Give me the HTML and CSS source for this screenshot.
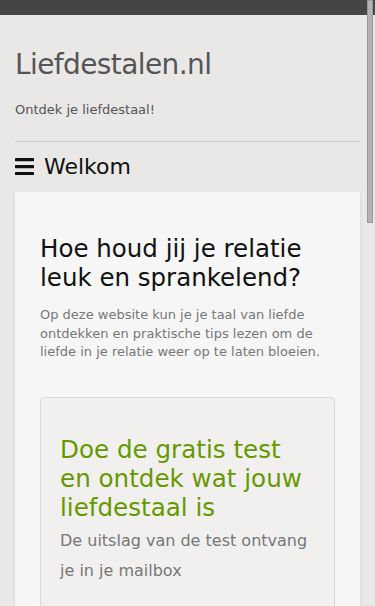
FILE: index.html
```html
<!DOCTYPE html>
<html>
<head>
    <title>Liefdestalen.nl</title>
    <link rel="stylesheet" href="styles.css">
</head>
<body>
    <div class="topbar"></div>
    <div class="container">
        <div class="header">
            <h1 class="site-title">Liefdestalen.nl</h1>
            <p class="tagline">Ontdek je liefdestaal!</p>
        </div>
        <div class="menu">
            <svg class="menu-icon" width="19" height="17" viewBox="0 0 19 17">
                <rect x="0" y="0" width="19" height="3.2" rx="0.6"/>
                <rect x="0" y="7" width="19" height="3.2" rx="0.6"/>
                <rect x="0" y="14" width="19" height="3.2" rx="0.6"/>
            </svg>
            <span class="menu-title">Welkom</span>
        </div>
        <div class="card">
            <h2 class="card-title">Hoe houd jij je relatie leuk en sprankelend?</h2>
            <p class="card-text">Op deze website kun je je taal van liefde ontdekken en praktische tips lezen om de liefde in je relatie weer op te laten bloeien.</p>
            <div class="test-box">
                <h3 class="test-title">Doe de gratis test en ontdek wat jouw liefdestaal is</h3>
                <p class="test-text">De uitslag van de test ontvang je in je mailbox</p>
                <form class="test-form">
                    <input class="field" type="text" placeholder="Je voornaam">
                    <input class="field" type="text" placeholder="Je e-mailadres">
                    <button class="button" type="button">Start de test</button>
                </form>
            </div>
            <h2 class="card-title">De vijf liefdestalen</h2>
            <p class="card-text">Iedereen geeft en ontvangt liefde op zijn eigen manier. Lees meer over bevestigende woorden, tijd en aandacht, cadeaus, hulpvaardigheid en lichamelijke aanraking.</p>
            <p class="card-text">Als je weet welke taal jouw partner spreekt, kun je elkaar beter begrijpen en laten voelen dat je van elkaar houdt.</p>
        </div>
        <div class="footer">&copy; Liefdestalen.nl</div>
    </div>
    <div class="scroll-thumb"></div>
</body>
</html>
```

FILE: styles.css
```css
html, body {
    margin: 0;
    padding: 0;
}
body {
    font-family: "DejaVu Sans", Verdana, sans-serif;
    background: #e9e8e6;
    color: #555;
}
.topbar {
    height: 15px;
    background: #454545;
}
.container {
    padding: 0 15px;
}
.header {
    padding-top: 32px;
    padding-bottom: 22px;
    border-bottom: 1px solid #cfcdcb;
}
.site-title {
    font-size: 28px;
    letter-spacing: -0.6px;
    font-weight: normal;
    color: #555;
    margin: 0;
    line-height: 36px;
}
.tagline {
    font-size: 13px;
    margin: 18px 0 0;
    line-height: 18px;
}
.menu {
    display: flex;
    align-items: center;
    gap: 10px;
    height: 48px;
    margin-bottom: 2px;
}
.menu-icon {
    fill: #111;
    flex: none;
}
.menu-title {
    font-size: 22px;
    color: #111;
}
.card {
    background: #f6f6f6;
    box-shadow: 0 1px 3px rgba(0,0,0,0.1);
    padding: 42px 25px 40px;
}
.card-title {
    font-size: 24.5px;
    font-weight: normal;
    color: #111;
    line-height: 29px;
    margin: 0 0 14px;
}
.card-text {
    font-size: 13px;
    line-height: 18.5px;
    color: #777;
    margin: 0 0 35px;
}
.test-box {
    background: #f1f0ef;
    border: 1px solid #dcd9d8;
    border-radius: 4px;
    box-shadow: 0 1px 2px rgba(0,0,0,0.05);
    padding: 37px 19px 30px;
    margin-bottom: 40px;
}
.test-title {
    font-size: 24.6px;
    font-weight: normal;
    color: #669900;
    line-height: 29px;
    margin: 0 0 4px;
}
.test-text {
    font-size: 16px;
    line-height: 30px;
    color: #777;
    margin: 0 0 24px;
}
.test-form {
    display: flex;
    flex-direction: column;
    gap: 14px;
}
.field {
    font-family: inherit;
    font-size: 14px;
    padding: 10px;
    border: 1px solid #ccc;
    border-radius: 3px;
    background: #fff;
}
.button {
    font-family: inherit;
    font-size: 16px;
    padding: 12px;
    border: none;
    border-radius: 3px;
    background: #669900;
    color: #fff;
}
.footer {
    font-size: 12px;
    color: #888;
    padding: 30px 0 60px;
}
.scroll-thumb {
    position: fixed;
    top: 0;
    right: 2px;
    width: 6px;
    height: 223px;
    box-sizing: border-box;
    background: #b3b3b3;
    border: 1px solid #999;
}
```
